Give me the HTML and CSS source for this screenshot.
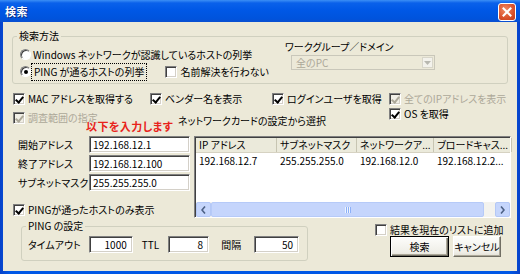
FILE: index.html
```html
<!DOCTYPE html>
<html lang="ja">
<head>
    <meta charset="UTF-8">
    <title>検索</title>
    <link rel="stylesheet" href="styles.css">
</head>
<body>
    <div class="window">
        <div class="titlebar">
            <span class="title">検索</span>
            <span class="close-btn">
                <svg width="10" height="10" viewBox="0 0 10 10"><path d="M1.5 1.5 L8.5 8.5 M8.5 1.5 L1.5 8.5" stroke="#fff" stroke-width="2" stroke-linecap="square"/></svg>
            </span>
        </div>

        <div class="client">
            <!-- 検索方法 -->
            <fieldset class="group method-group">
                <legend>検索方法</legend>
                <div class="method-body">
                    <div class="method-left">
                        <div class="row">
                            <span class="radio"></span>Windows ネットワークが認識しているホストの列挙
                        </div>
                        <div class="row">
                            <span class="radio checked"></span><span class="focus">PING が通るホストの列挙</span>
                            <span class="cb name-cb"></span>名前解決を行わない
                        </div>
                    </div>
                    <div class="method-right">
                        <div class="wg-label">ワークグループ／ドメイン</div>
                        <div class="combo">
                            <span class="combo-text">全のPC</span>
                            <span class="combo-btn">
                                <svg width="7" height="4" viewBox="0 0 7 4"><path d="M0 0 H7 L3.5 4 Z" fill="#b8b8b0"/></svg>
                            </span>
                        </div>
                    </div>
                </div>
            </fieldset>

            <!-- options -->
            <div class="options">
                <div class="row"><span class="cb checked"></span>MAC アドレスを取得する</div>
                <div class="row"><span class="cb checked"></span>ベンダー名を表示</div>
                <div class="row"><span class="cb checked"></span>ログインユーザを取得</div>
                <div class="row disabled"><span class="cb checked off"></span>全てのIPアドレスを表示</div>
                <div class="row disabled range"><span class="cb checked off"></span>調査範囲の指定</div>
                <div class="row nic-label">ネットワークカードの設定から選択</div>
                <div class="row os"><span class="cb checked"></span>OS を取得</div>
                <div class="hint">以下を入力します</div>
            </div>

            <!-- address range + adapter list -->
            <div class="main">
                <div class="range-col">
                    <div class="field"><span class="field-label">開始アドレス</span><span class="input">192.168.12.1</span></div>
                    <div class="field"><span class="field-label">終了アドレス</span><span class="input">192.168.12.100</span></div>
                    <div class="field"><span class="field-label">サブネットマスク</span><span class="input">255.255.255.0</span></div>
                    <div class="row ping-only"><span class="cb checked"></span>PINGが通ったホストのみ表示</div>
                </div>
                <div class="listview">
                    <div class="lv-header">
                        <span class="col c1">IP アドレス</span>
                        <span class="col c2">サブネットマスク</span>
                        <span class="col c3">ネットワークア...</span>
                        <span class="col c4">ブロードキャス...</span>
                    </div>
                    <div class="lv-body">
                        <div class="lv-row">
                            <span class="col c1">192.168.12.7</span>
                            <span class="col c2">255.255.255.0</span>
                            <span class="col c3">192.168.12.0</span>
                            <span class="col c4">192.168.12.2...</span>
                        </div>
                    </div>
                    <div class="hscroll">
                        <span class="sb-btn">
                            <svg width="5" height="8" viewBox="0 0 5 8"><path d="M4 0.5 L1 4 L4 7.5" stroke="#4d6185" stroke-width="1.6" fill="none"/></svg>
                        </span>
                        <span class="sb-thumb"><span class="grip"></span></span>
                        <span class="sb-track"></span>
                        <span class="sb-btn">
                            <svg width="5" height="8" viewBox="0 0 5 8"><path d="M1 0.5 L4 4 L1 7.5" stroke="#4d6185" stroke-width="1.6" fill="none"/></svg>
                        </span>
                    </div>
                </div>
            </div>

            <!-- bottom -->
            <div class="bottom">
                <fieldset class="group ping-group">
                    <legend>PING の設定</legend>
                    <div class="ping-row">
                        <span class="ping-label">タイムアウト</span>
                        <span class="input num timeout">1000</span>
                        <span class="ping-label ttl">TTL</span>
                        <span class="input num ttl-in">8</span>
                        <span class="ping-label gap">間隔</span>
                        <span class="input num interval">50</span>
                    </div>
                </fieldset>
                <div class="bottom-right">
                    <div class="row"><span class="cb"></span>結果を現在のリストに追加</div>
                    <div class="buttons">
                        <button class="btn default">検索</button>
                        <button class="btn">キャンセル</button>
                    </div>
                </div>
            </div>
        </div>
    </div>
</body>
</html>
```

FILE: styles.css
```css
* {
    margin: 0;
    padding: 0;
    box-sizing: border-box;
}

body {
    width: 520px;
    height: 274px;
    overflow: hidden;
    font-family: "Noto Sans CJK JP", sans-serif;
    font-size: 10px;
    line-height: 12px;
    font-feature-settings: "palt";
    color: #000;
}

.window {
    width: 520px;
    height: 274px;
    display: flex;
    flex-direction: column;
    background: linear-gradient(90deg, #0842c9, #0058e6 2%, #0058e6 98%, #0842c9);
}

/* title bar */
.titlebar {
    height: 22px;
    display: flex;
    align-items: center;
    justify-content: space-between;
    padding: 0 4px 0 5px;
    background: linear-gradient(#3c8ff5 0, #0a61ea 3px, #0058e6 45%, #0053dc 85%, #0a4fd0 100%);
}

.title {
    color: #fff;
    font-weight: bold;
    font-size: 11px;
    letter-spacing: 0.5px;
    text-shadow: 1px 1px #0a2a80;
    margin-top: -1px;
}

.close-btn {
    width: 18px;
    height: 18px;
    margin-top: 1px;
    display: flex;
    align-items: center;
    justify-content: center;
    border: 1px solid #fff;
    border-radius: 3px;
    background: radial-gradient(circle at 40% 35%, #ef8a64, #d9512b 60%, #c03a18);
}

/* client area */
.client {
    flex: 1;
    margin: 0 3px 3px;
    background: #ece9d8;
    position: relative;
}

.row {
    display: flex;
    align-items: center;
    height: 14px;
    white-space: nowrap;
}

.disabled {
    color: #aca899;
}

/* group boxes */
.group {
    border: 1px solid #d0d0bf;
    border-radius: 3px;
    padding: 0;
}

.group legend {
    margin-left: 4px;
    padding: 0 2px;
    line-height: 12px;
}

.method-group {
    margin: 8px 0 0 9px;
    width: 496px;
}

.method-body {
    display: flex;
    align-items: flex-start;
    padding-bottom: 3px;
}

.method-left {
    width: 272px;
    padding: 4px 0 0 7px;
}

.method-left .row {
    height: 17px;
}

.method-right {
    margin-top: -1px;
}

.wg-label {
    height: 13px;
}

.combo {
    margin: 1px 0 0 6px;
    width: 144px;
    height: 15px;
    display: flex;
    justify-content: space-between;
    border: 1px solid #c9c7ba;
    background: #ece9d8;
    color: #aca899;
}

.combo-text {
    padding: 1px 0 0 4px;
}

.combo-btn {
    width: 11px;
    height: 11px;
    margin: 1px 1px 0 0;
    display: flex;
    align-items: center;
    justify-content: center;
    border: 1px solid #d8d6ca;
    background: #f3f2ec;
}

/* radios and checkboxes */
.radio {
    width: 11px;
    height: 11px;
    margin-right: 2px;
    border-radius: 50%;
    border: 1px solid;
    border-color: #808080 #fff #fff #808080;
    box-shadow: inset 1px 1px #404040;
    background: #fff;
    position: relative;
    flex: none;
}

.radio.checked::after {
    content: '';
    position: absolute;
    left: 3px;
    top: 3px;
    width: 4px;
    height: 4px;
    border-radius: 50%;
    background: #000;
}

.focus {
    outline: 1px dotted #000;
    outline-offset: 2px;
    margin-left: 1px;
}

.cb {
    width: 12px;
    height: 12px;
    margin-right: 3px;
    border: 1px solid;
    border-color: #808080 #fff #fff #808080;
    box-shadow: inset 1px 1px #404040, inset -1px -1px #d4d0c8;
    background: #fff;
    position: relative;
    flex: none;
}

.cb.checked::after {
    content: '';
    position: absolute;
    left: 3px;
    top: 1px;
    width: 3px;
    height: 6px;
    border: solid #000;
    border-width: 0 2px 2px 0;
    transform: rotate(40deg);
}

.cb.off {
    background: #f1efe6;
}

.cb.off::after {
    border-color: #aca899;
}

.name-cb {
    margin-left: 21px;
}

/* options area */
.options {
    position: relative;
    display: grid;
    grid-template-columns: 137px 122px 117px auto;
    grid-template-rows: 15px 15px;
    margin: 8px 0 0 10px;
}

.options .range {
    margin-top: 4px;
}

.options .nic-label {
    grid-column: 2 / 4;
    margin: 7px 0 0 28px;
}

.options .os {
    grid-column: 4;
}

.hint {
    position: absolute;
    left: 73px;
    top: 28px;
    color: #e8231b;
    font-weight: bold;
    font-size: 11px;
    letter-spacing: 0.4px;
    white-space: nowrap;
}

/* main area */
.main {
    display: flex;
    margin: 14px 0 0 10px;
}

.range-col {
    width: 181px;
}

.field {
    display: flex;
    align-items: center;
    height: 17px;
    margin-bottom: 2px;
}

.field-label {
    width: 76px;
    padding-left: 5px;
    white-space: nowrap;
}

.input {
    display: block;
    width: 101px;
    height: 17px;
    padding: 2px 0 0 3px;
    border: 1px solid;
    border-color: #808080 #fff #fff #808080;
    box-shadow: inset 1px 1px #404040, inset -1px -1px #d4d0c8;
    background: #fff;
    white-space: nowrap;
}

.ping-only {
    margin-top: 12px;
}

.listview {
    width: 317px;
    height: 82px;
    display: flex;
    flex-direction: column;
    border: 1px solid;
    border-color: #808080 #fff #fff #808080;
    box-shadow: inset 1px 1px #404040;
    background: #fff;
}

.lv-header {
    display: flex;
    height: 15px;
    margin: 1px 0 0 1px;
    background: #ebeadb;
    border-bottom: 1px solid #d6d2c2;
}

.col {
    flex: none;
    padding-left: 3px;
    white-space: nowrap;
    overflow: hidden;
}

.lv-header .col {
    border-right: 1px solid #c7c5b2;
    line-height: 14px;
}

.c1 { width: 81px; }
.c2 { width: 80px; }
.c3 { width: 77px; }
.c4 { width: 78px; }

.lv-body {
    flex: 1;
    padding: 0 0 0 1px;
}

.lv-row {
    display: flex;
    height: 15px;
    line-height: 15px;
}

.hscroll {
    display: flex;
    height: 15px;
    margin-left: 1px;
    background: #f4f3ee;
}

.sb-btn {
    width: 15px;
    display: flex;
    align-items: center;
    justify-content: center;
    border: 1px solid #b4c8f6;
    border-radius: 2px;
    background: #c6d6fc;
}

.sb-thumb {
    width: 273px;
    display: flex;
    align-items: center;
    justify-content: center;
    border: 1px solid #b6caf8;
    border-radius: 2px;
    background: #c5d5fc;
}

.grip {
    width: 6px;
    height: 6px;
    background: repeating-linear-gradient(90deg, #eef4fe 0 1px, #8cb0f8 1px 2px);
}

.sb-track {
    flex: 1;
}

/* bottom area */
.bottom {
    display: flex;
    align-items: flex-start;
    margin-top: 2px;
}

.ping-group {
    margin-left: 18px;
    width: 287px;
}

.ping-row {
    display: flex;
    align-items: center;
    margin: 4px 0 7px 6px;
}

.ping-label {
    white-space: nowrap;
}

.input.num {
    text-align: right;
    padding: 2px 5px 0 0;
}

.timeout {
    width: 44px;
    margin-left: 8px;
}

.ttl {
    margin-left: 9px;
}

.ttl-in {
    width: 41px;
    margin-left: 9px;
}

.gap {
    margin-left: 12px;
}

.interval {
    width: 45px;
    margin-left: 13px;
}

.bottom-right {
    margin: 3px 0 0 67px;
}

.buttons {
    display: flex;
    gap: 4px;
    margin: -1px 0 0 15px;
}

.btn {
    height: 21px;
    width: 48px;
    font-family: inherit;
    font-size: 10px;
    font-feature-settings: "palt";
    white-space: nowrap;
    color: #000;
    background: linear-gradient(#fdfdfb, #efeee7 80%, #e3e0d4);
    border: 1px solid;
    border-color: #fff #716f64 #716f64 #fff;
    box-shadow: inset -1px -1px #aca899;
}

.btn.default {
    width: 59px;
    border-color: #000;
    box-shadow: inset 1px 1px #fff, inset -1px -1px #716f64, inset -2px -2px #aca899;
}
```
